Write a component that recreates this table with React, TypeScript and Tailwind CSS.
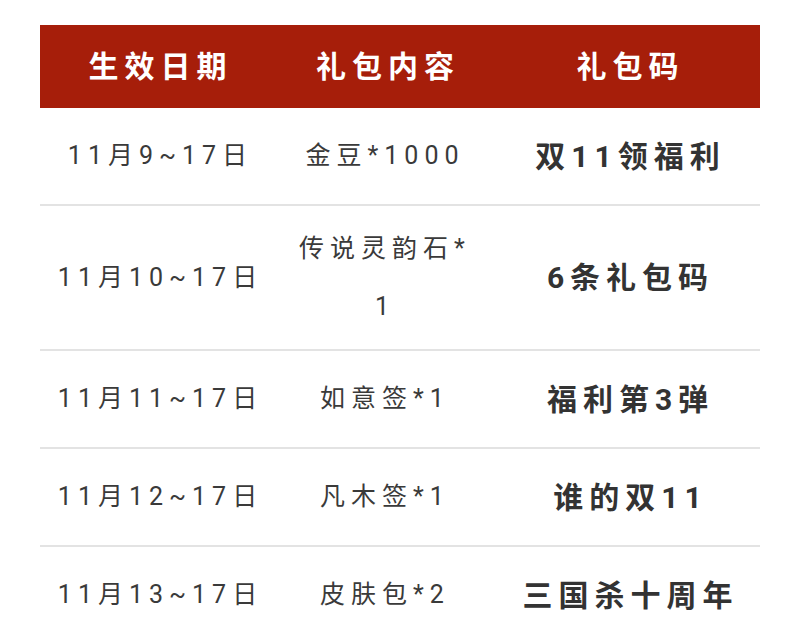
import React from 'react';

type Row = { date: string; gift: string; code: string };

const ROWS: Row[] = [
  { date: '11月9~17日', gift: '金豆*1000', code: '双11领福利' },
  { date: '11月10~17日', gift: '传说灵韵石*1', code: '6条礼包码' },
  { date: '11月11~17日', gift: '如意签*1', code: '福利第3弹' },
  { date: '11月12~17日', gift: '凡木签*1', code: '谁的双11' },
  { date: '11月13~17日', gift: '皮肤包*2', code: '三国杀十周年' },
];

const FONT = "font-['Roboto','Noto_Sans_CJK_SC',sans-serif]";

export default function App() {
  return (
    <div className={`min-h-screen bg-white pt-[25px] px-[40px] ${FONT}`}>
      <table className="w-[720px] table-fixed border-collapse">
        <colgroup>
          <col className="w-[235px]" />
          <col className="w-[220px]" />
          <col className="w-[265px]" />
        </colgroup>
        <thead>
          <tr className="bg-[#a61e0a] text-white h-[83px]">
            {['生效日期', '礼包内容', '礼包码'].map(h => (
              <th key={h} className="text-[30px] font-bold tracking-[6px] pl-[6px] text-center align-middle">
                {h}
              </th>
            ))}
          </tr>
        </thead>
        <tbody>
          {ROWS.map(r => (
            <tr key={r.date} className="border-b-2 border-[#e3e3e3]">
              <td className="py-[13.5px] text-center text-[25px] leading-[58px] tracking-[6px] pl-[6px] text-[#3a3a3a]">
                {r.date}
              </td>
              <td className="py-[13.5px] px-5 text-center text-[25px] leading-[58px] tracking-[6px] text-[#3a3a3a] break-all">
                {r.gift}
              </td>
              <td className="py-[13.5px] text-center text-[30px] leading-[69px] tracking-[6px] pl-[6px] font-bold text-[#333]">
                {r.code}
              </td>
            </tr>
          ))}
        </tbody>
      </table>
    </div>
  );
}
